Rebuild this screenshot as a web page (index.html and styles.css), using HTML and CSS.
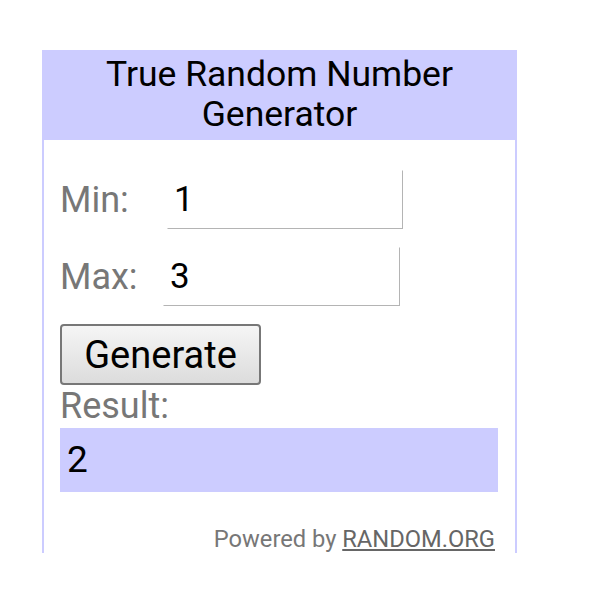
FILE: index.html
```html
<!DOCTYPE html>
<html>
<head>
<meta charset="utf-8">
<link rel="stylesheet" href="styles.css">
</head>
<body>
<div class="widget">
  <div class="header">True Random Number<br>Generator</div>
  <div class="content">
    <div class="row">
      <span class="label label-min">Min:</span>
      <input class="field field-min" type="text" value="1">
    </div>
    <div class="row">
      <span class="label label-max">Max:</span>
      <input class="field field-max" type="text" value="3">
    </div>
    <button class="btn">Generate</button>
    <div class="result-label">Result:</div>
    <div class="result">2</div>
    <div class="powered">Powered by <a class="link" href="#">RANDOM.ORG</a></div>
  </div>
</div>
</body>
</html>
```

FILE: styles.css
```css
html, body {
  margin: 0;
  padding: 0;
  background: #ffffff;
}
body {
  font-family: Roboto, "Liberation Sans", sans-serif;
}
.widget {
  margin: 50px 0 0 42px;
  width: 475px;
  box-sizing: border-box;
  border-left: 2px solid #ccccff;
  border-right: 2px solid #ccccff;
}
.header {
  height: 90px;
  box-sizing: border-box;
  padding-top: 4px;
  background: #ccccff;
  color: #000;
  font-size: 35.5px;
  line-height: 40px;
  text-align: center;
}
.content {
  padding: 30px 17px 0 16px;
}
.row {
  display: flex;
  align-items: center;
  height: 59px;
  margin-bottom: 18px;
}
.label {
  font-size: 36px;
  color: #777777;
}
.label-min { width: 107px; }
.label-max { width: 103px; }
.field {
  width: 236px;
  height: 59px;
  box-sizing: border-box;
  border: 1px solid transparent;
  border-right-color: #b4b4b4;
  border-bottom-color: #b4b4b4;
  outline: none;
  padding: 0 0 0 6px;
  font-family: Roboto, "Liberation Sans", sans-serif;
  font-size: 35px;
  color: #000;
  background: #fff;
}
.field-max { width: 237px; }
.btn {
  display: block;
  width: 201px;
  height: 61px;
  box-sizing: border-box;
  border: 2px solid #777777;
  border-radius: 4px;
  background: linear-gradient(#f5f5f5, #dcdcdc);
  font-family: Roboto, "Liberation Sans", sans-serif;
  font-size: 38px;
  color: #000;
  padding: 0;
  margin: 0;
}
.result-label {
  font-size: 36px;
  color: #777777;
  line-height: 42px;
  margin-top: 0;
}
.result {
  margin-top: 1px;
  width: 438px;
  height: 64px;
  box-sizing: border-box;
  background: #ccccff;
  padding-left: 7px;
  font-size: 37px;
  line-height: 64px;
  color: #000;
}
.powered {
  margin-top: 34px;
  text-align: right;
  padding-right: 3px;
  font-size: 23.7px;
  line-height: 27px;
  color: #777777;
}
.link {
  color: #666666;
  text-decoration: underline;
}
```
